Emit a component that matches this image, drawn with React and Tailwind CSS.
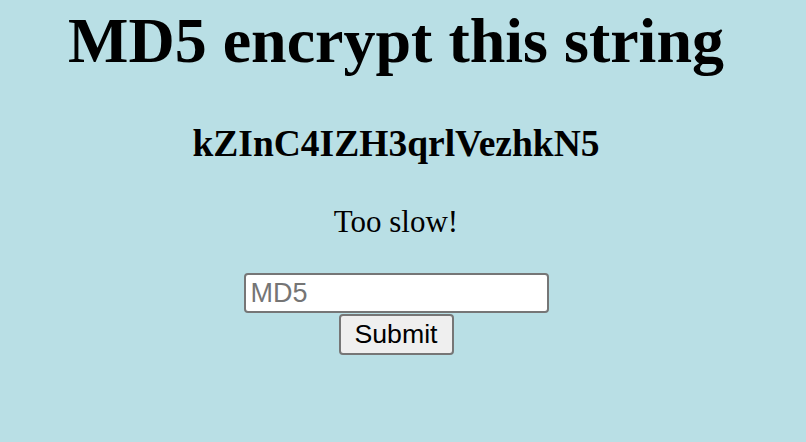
export default function App() {
  return (
    <div className="min-h-[442px] w-full bg-[#b9dfe5]">
      <div className="flex w-[792px] flex-col items-center text-black">
        <h1 className="mt-[9px] font-['Liberation_Serif',serif] text-[64px] font-bold leading-[64px]">
          MD5 encrypt this string
        </h1>
        <h2 className="mt-[52px] font-['Liberation_Serif',serif] text-[37.5px] font-bold leading-[37px]">
          kZInC4IZH3qrlVezhkN5
        </h2>
        <p className="mt-[44px] font-['Liberation_Serif',serif] text-[31px] leading-[31px]">Too slow!</p>
        <form className="mt-[36px] flex flex-col items-center" onSubmit={(e) => e.preventDefault()}>
          <input
            type="text"
            placeholder="MD5"
            className="h-[40px] w-[305px] rounded-[4px] border-2 border-[#767676] bg-white px-[5px] font-['Liberation_Sans',Arial,sans-serif] text-[27px] text-black placeholder:text-[#757575] focus:outline-none"
          />
          <button
            type="submit"
            className="mt-[1px] h-[41px] w-[115px] rounded-[4px] border-2 border-[#767676] bg-[#efefef] font-['Liberation_Sans',Arial,sans-serif] text-[26.7px] leading-none text-black"
          >
            Submit
          </button>
        </form>
      </div>
    </div>
  );
}
